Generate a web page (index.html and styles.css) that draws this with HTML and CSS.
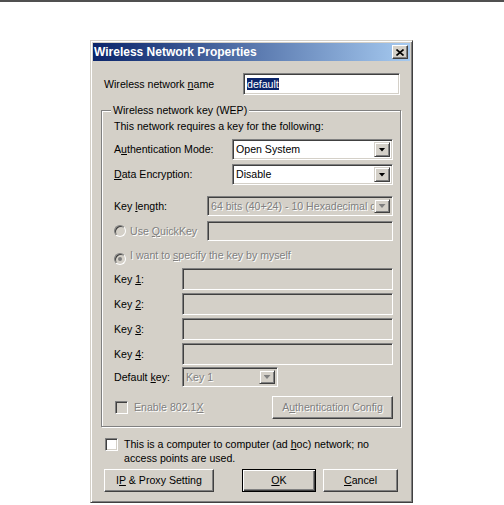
FILE: index.html
```html
<!DOCTYPE html>
<html lang="en">
<head>
  <meta charset="UTF-8">
  <title>Wireless Network Properties</title>
  <link rel="stylesheet" href="styles.css">
</head>
<body>

  <div class="topline"></div>

  <div class="dialog">
    <div class="titlebar">
      <span class="title">Wireless Network Properties</span>
      <span class="close-btn">
        <svg width="8" height="7" viewBox="0 0 8 7"><path d="M0.5 0.5L7.5 6.5M7.5 0.5L0.5 6.5" stroke="#000" stroke-width="1.6"/></svg>
      </span>
    </div>

    <div class="client">
      <div class="name-row">
        <span class="name-label">Wireless network <u>n</u>ame</span>
        <div class="field name-field"><span class="selected">default</span></div>
      </div>

      <fieldset class="group">
        <legend>Wireless network key (WEP)</legend>
        <p class="intro">This network requires a key for the following:</p>

        <div class="row row-auth">
          <span class="label label-wide">A<u>u</u>thentication Mode:</span>
          <div class="combo combo-wide"><span class="combo-text">Open System</span><span class="combo-btn"></span></div>
        </div>

        <div class="row row-enc">
          <span class="label label-wide"><u>D</u>ata Encryption:</span>
          <div class="combo combo-wide"><span class="combo-text">Disable</span><span class="combo-btn"></span></div>
        </div>

        <div class="row row-keylen">
          <span class="label label-mid">Key <u>l</u>ength:</span>
          <div class="combo combo-mid disabled"><span class="combo-text">64 bits (40+24) - 10 Hexadecimal digits</span><span class="combo-btn"></span></div>
        </div>

        <div class="row row-quick">
          <span class="label label-mid disabled-text"><span class="radio"></span>Use <u>Q</u>uickKey</span>
          <div class="field field-mid disabled"></div>
        </div>

        <div class="row row-radio">
          <span class="label disabled-text"><span class="radio checked"></span>I want to <u>s</u>pecify the key by myself</span>
        </div>

        <div class="row row-key first-key">
          <span class="label label-narrow">Key <u>1</u>:</span>
          <div class="field field-key disabled"></div>
        </div>
        <div class="row row-key">
          <span class="label label-narrow">Key <u>2</u>:</span>
          <div class="field field-key disabled"></div>
        </div>
        <div class="row row-key">
          <span class="label label-narrow">Key <u>3</u>:</span>
          <div class="field field-key disabled"></div>
        </div>
        <div class="row row-key">
          <span class="label label-narrow">Key <u>4</u>:</span>
          <div class="field field-key disabled"></div>
        </div>

        <div class="row row-default">
          <span class="label label-narrow">Default <u>k</u>ey:</span>
          <div class="combo combo-small disabled"><span class="combo-text">Key 1</span><span class="combo-btn"></span></div>
        </div>

        <div class="row row-enable">
          <span class="label disabled-text"><span class="check disabled"></span>Enable 802.1<u>X</u></span>
          <span class="button auth-btn disabled-text">A<u>u</u>thentication Config</span>
        </div>
      </fieldset>

      <div class="adhoc-row">
        <span class="check"></span>
        <span class="adhoc-text">This is a computer to computer (ad <u>h</u>oc) network; no<br>access points are used.</span>
      </div>

      <div class="button-row">
        <span class="button ip-btn">I<u>P</u> &amp; Proxy Setting</span>
        <span class="button default-btn ok-btn"><u>O</u>K</span>
        <span class="button cancel-btn"><u>C</u>ancel</span>
      </div>
    </div>
  </div>

</body>
</html>
```

FILE: styles.css
```css
/* General Reset */
* {
  margin: 0;
  padding: 0;
  box-sizing: border-box;
}

body {
  font-family: 'Liberation Sans', Arial, sans-serif;
  font-size: 10.6px;
  color: #000;
  background-color: #fff;
}

.topline {
  height: 2px;
  background-color: #505050;
}

/* Dialog frame */
.dialog {
  width: 323px;
  margin: 38px 0 0 90px;
  padding: 2px;
  background-color: #d4d0c8;
  border: 1px solid;
  border-color: #d4d0c8 #404040 #404040 #d4d0c8;
  box-shadow: inset 1px 1px 0 #fff, inset -1px -1px 0 #808080;
}

.titlebar {
  height: 18px;
  display: flex;
  align-items: center;
  justify-content: space-between;
  padding: 0 2px 0 1px;
  background: linear-gradient(to right, #0a246a, #a6caf0);
}

.title {
  color: #fff;
  font-weight: bold;
  font-size: 12px;
  line-height: 18px;
}

.close-btn {
  width: 16px;
  height: 14px;
  display: flex;
  align-items: center;
  justify-content: center;
  background-color: #d4d0c8;
  border: 1px solid;
  border-color: #fff #404040 #404040 #fff;
  box-shadow: inset -1px -1px 0 #808080;
}

.client {
  padding: 12px 9px 8px 8px;
}

/* Name row */
.name-row {
  display: flex;
  align-items: center;
  height: 22px;
}

.name-label {
  width: 139px;
  margin-left: 3px;
}

.field {
  background-color: #fff;
  border: 1px solid;
  border-color: #808080 #fff #fff #808080;
  box-shadow: inset 1px 1px 0 #404040, inset -1px -1px 0 #d4d0c8;
}

.field.disabled {
  background-color: #d4d0c8;
}

.name-field {
  width: 157px;
  height: 22px;
  padding: 4px 3px;
  line-height: 12px;
}

.selected {
  background-color: #0a246a;
  color: #fff;
}

/* Group box */
.group {
  margin-top: 9px;
  padding: 3px 7px 7px 12px;
  border: 1px solid #808080;
  box-shadow: 1px 1px 0 #fff, inset 1px 1px 0 #fff;
}

.group legend {
  margin-left: -3px;
  padding: 0 2px;
  line-height: 13px;
  background-color: #d4d0c8;
}

.intro {
  line-height: 13px;
}

.row {
  display: flex;
  align-items: center;
}

.label {
  display: block;
  white-space: nowrap;
  line-height: 13px;
}

.label-wide { width: 118px; }
.label-mid { width: 93px; }
.label-narrow { width: 68px; }

.disabled-text {
  color: #808080;
  text-shadow: 1px 1px 0 #fff;
}

.row-auth { margin-top: 6px; }
.row-enc { margin-top: 4px; }
.row-keylen { margin-top: 11px; }
.row-quick { margin-top: 5px; }
.row-radio { margin-top: 9px; height: 13px; }
.row-key { margin-top: 3px; }
.row-key.first-key { margin-top: 5px; }
.row-default { margin-top: 2px; }
.row-enable {
  margin-top: 9px;
  justify-content: space-between;
}

/* Combo boxes */
.combo {
  display: flex;
  align-items: stretch;
  height: 21px;
  padding: 2px;
  background-color: #fff;
  border: 1px solid;
  border-color: #808080 #fff #fff #808080;
  box-shadow: inset 1px 1px 0 #404040, inset -1px -1px 0 #d4d0c8;
}

.combo-text {
  flex: 1;
  padding-left: 1px;
  line-height: 15px;
  white-space: nowrap;
  overflow: hidden;
}

.combo-btn {
  width: 16px;
  display: flex;
  align-items: center;
  justify-content: center;
  background-color: #d4d0c8;
  border: 1px solid;
  border-color: #d4d0c8 #404040 #404040 #d4d0c8;
  box-shadow: inset 1px 1px 0 #fff, inset -1px -1px 0 #808080;
}

.combo-btn::after {
  content: "";
  width: 7px;
  height: 4px;
  background-color: #000;
  clip-path: polygon(0 0, 100% 0, 50% 100%);
}

.combo.disabled {
  background-color: #d4d0c8;
  color: #808080;
  text-shadow: 1px 1px 0 #fff;
}

.combo.disabled .combo-btn::after {
  background-color: #808080;
}

.combo-wide { width: 161px; }
.combo-mid { width: 186px; height: 20px; }
.combo-small { width: 96px; height: 20px; }

.field-mid { width: 186px; height: 20px; }
.field-key { width: 211px; height: 22px; }

/* Radio and check */
.radio {
  display: inline-flex;
  align-items: center;
  justify-content: center;
  width: 12px;
  height: 12px;
  margin-right: 4px;
  vertical-align: -2px;
  border-radius: 50%;
  border: 1px solid;
  border-color: #808080 #fff #fff #808080;
  background-color: #d4d0c8;
  box-shadow: inset 1px 1px 0 #404040;
}

.radio.checked::after {
  content: "";
  width: 4px;
  height: 4px;
  border-radius: 50%;
  background-color: #808080;
}

.check {
  display: inline-block;
  width: 13px;
  height: 13px;
  background-color: #fff;
  border: 1px solid;
  border-color: #808080 #fff #fff #808080;
  box-shadow: inset 1px 1px 0 #404040, inset -1px -1px 0 #d4d0c8;
}

.check.disabled {
  margin: 0 6px 0 1px;
  vertical-align: -3px;
  background-color: #d4d0c8;
}

/* Buttons */
.button {
  display: block;
  height: 23px;
  line-height: 21px;
  text-align: center;
  white-space: nowrap;
  background-color: #d4d0c8;
  border: 1px solid;
  border-color: #fff #404040 #404040 #fff;
  box-shadow: inset -1px -1px 0 #808080;
}

.default-btn {
  border-color: #000;
  box-shadow: inset 1px 1px 0 #fff, inset -1px -1px 0 #404040, inset -2px -2px 0 #808080;
}

.auth-btn { width: 121px; }

.adhoc-row {
  display: flex;
  align-items: flex-start;
  margin: 10px 0 0 4px;
}

.adhoc-row .check {
  flex-shrink: 0;
  margin-top: 1px;
}

.adhoc-text {
  margin-left: 6px;
  line-height: 14px;
}

.button-row {
  display: flex;
  margin: 4px 0 0 3px;
}

.ip-btn { width: 110px; }
.ok-btn { width: 74px; margin-left: 28px; }
.cancel-btn { width: 75px; margin-left: 7px; }
```
